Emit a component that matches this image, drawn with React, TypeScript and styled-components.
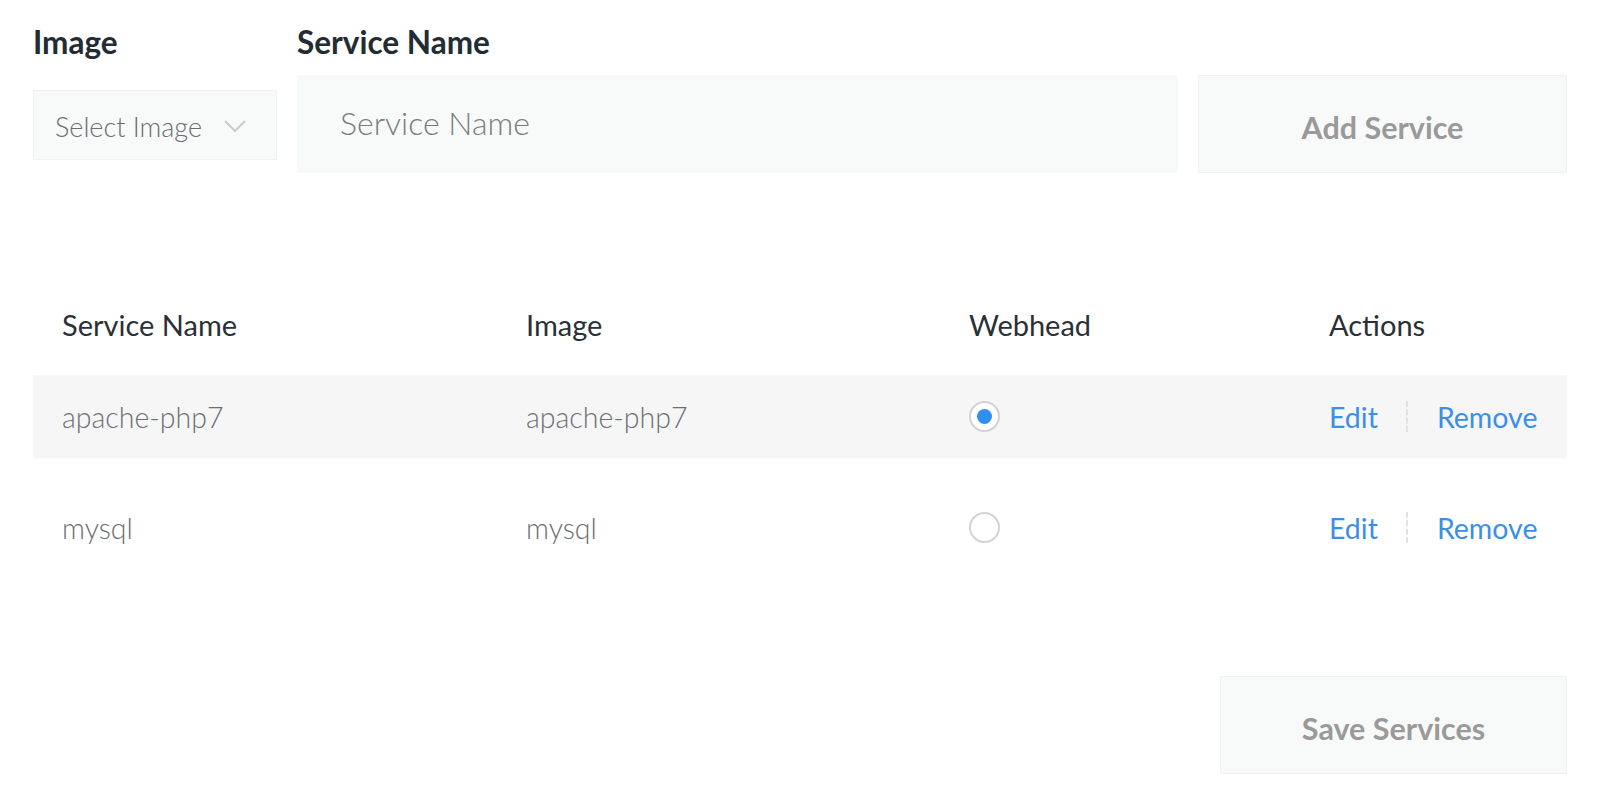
import React from "react";
import styled, { createGlobalStyle } from "styled-components";

const Global = createGlobalStyle`
  * { box-sizing: border-box; }
  html, body { margin: 0; padding: 0; background: #ffffff; }
  body { font-family: Lato, "Open Sans", "Noto Sans", sans-serif; }
`;

const Page = styled.div`
  width: 1600px;
  padding: 24px 33px 0 33px;
`;

const FormGrid = styled.div`
  display: grid;
  grid-template-columns: 244px 1fr 369px;
  column-gap: 20px;
  row-gap: 15px;
  align-items: start;
`;

const Label = styled.div`
  font-size: 31.5px;
  line-height: 36px;
  font-weight: 700;
  color: #232b33;
`;

const SelectBox = styled.div`
  margin-top: 15px;
  height: 70px;
  background: #f8f9f9;
  border: 1px solid #f1f2f2;
  display: flex;
  align-items: center;
  justify-content: space-between;
  padding: 2px 30px 0 21px;
  font-size: 27px;
  font-weight: 300;
  color: #676d73;
`;

const Input = styled.input`
  height: 98px;
  width: 100%;
  background: #f8f9f9;
  border: none;
  outline: none;
  padding: 0 0 4px 43px;
  font-family: inherit;
  font-size: 32px;
  font-weight: 300;
  color: #333;
  &::placeholder { color: #777c81; }
`;

const GhostButton = styled.button<{ $width?: number }>`
  height: 98px;
  width: ${(p) => (p.$width ? `${p.$width}px` : "100%")};
  background: #f8f9f9;
  border: 1px solid #f1f2f2;
  font-family: inherit;
  font-size: 30.5px;
  font-weight: 700;
  color: #9a9a9a;
  padding: 6px 0 0 0;
  cursor: pointer;
`;

const Table = styled.div`
  margin-top: 135px;
  display: flex;
  flex-direction: column;
  gap: 28px;
`;

const Row = styled.div<{ $shaded?: boolean; $header?: boolean }>`
  display: grid;
  grid-template-columns: 464px 443px 360px 1fr;
  align-items: center;
  padding-left: 29px;
  height: ${(p) => (p.$header ? "34px" : "83px")};
  margin-bottom: ${(p) => (p.$header ? "5px" : "0")};
  background: ${(p) => (p.$shaded ? "#f6f6f6" : "transparent")};
  font-size: ${(p) => (p.$header ? "29px" : "28.5px")};
  font-weight: ${(p) => (p.$header ? 400 : 300)};
  color: ${(p) => (p.$header ? "#2a3036" : "#6c7075")};
`;

const Cell = styled.div`
  display: flex;
  align-items: center;
  line-height: 34px;
`;

const Radio = styled.span<{ $checked?: boolean }>`
  display: flex;
  align-items: center;
  justify-content: center;
  width: 31px;
  height: 31px;
  margin-top: -1px;
  border-radius: 50%;
  border: 2px solid #d3d3d3;
  background: #fff;
  &::after {
    content: "";
    display: ${(p) => (p.$checked ? "block" : "none")};
    width: 15px;
    height: 15px;
    border-radius: 50%;
    background: #2f8ff0;
  }
`;

const Actions = styled.div`
  display: flex;
  align-items: center;
`;

const Link = styled.a`
  color: #3b8fe8;
  font-weight: 400;
  text-decoration: none;
  cursor: pointer;
`;

const Divider = styled.span`
  display: inline-block;
  height: 31px;
  margin: 0 29px 0 28px;
  border-left: 2px dashed #e2e2e2;
`;

const Footer = styled.div`
  display: flex;
  justify-content: flex-end;
  margin-top: 107px;
`;

const services = [
  { name: "apache-php7", image: "apache-php7", webhead: true },
  { name: "mysql", image: "mysql", webhead: false },
];

const Chevron = () => (
  <svg width="22" height="12" viewBox="0 0 22 12" fill="none">
    <path d="M1 1l10 10L21 1" stroke="#c9cbcd" strokeWidth="2" />
  </svg>
);

export default function App() {
  return (
    <Page>
      <Global />
      <FormGrid>
        <Label>Image</Label>
        <Label>Service Name</Label>
        <div />
        <SelectBox>
          <span>Select Image</span>
          <Chevron />
        </SelectBox>
        <Input placeholder="Service Name" />
        <GhostButton>Add Service</GhostButton>
      </FormGrid>

      <Table>
        <Row $header>
          <Cell>Service Name</Cell>
          <Cell>Image</Cell>
          <Cell>Webhead</Cell>
          <Cell>Actions</Cell>
        </Row>
        {services.map((s, i) => (
          <Row key={s.name} $shaded={i % 2 === 0}>
            <Cell>{s.name}</Cell>
            <Cell>{s.image}</Cell>
            <Cell>
              <Radio $checked={s.webhead} />
            </Cell>
            <Actions>
              <Link>Edit</Link>
              <Divider />
              <Link>Remove</Link>
            </Actions>
          </Row>
        ))}
      </Table>

      <Footer>
        <GhostButton $width={347}>Save Services</GhostButton>
      </Footer>
    </Page>
  );
}
